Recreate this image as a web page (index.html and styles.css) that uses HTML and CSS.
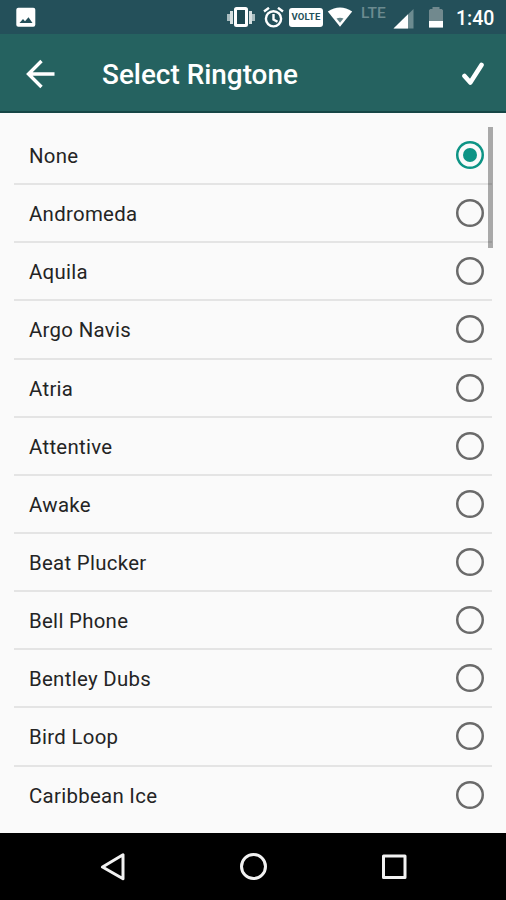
FILE: index.html
```html
<!DOCTYPE html>
<html lang="en">
<head>
<meta charset="utf-8">
<title>Select Ringtone</title>
<link rel="stylesheet" href="styles.css">
</head>
<body>
<div class="screen">
  <div class="status">
    <svg class="photo" width="20" height="20" viewBox="0 0 20 20"><rect x=".3" y=".8" width="19" height="19" rx="2" fill="#fff"/><path d="M3.500 16L7 12l2 2.200 3.500-4 4 5.800z" fill="#24505a"/></svg>
    <svg class="vibrate" width="28" height="20" viewBox="0 0 28 20"><path d="M0 7h3v7H0zM25 7h3v7h-3z" fill="#a9bcbf"/><path d="M3 4h3v13H3zM22 4h3v13h-3z" fill="#d5dfe0"/><rect x="8.500" y="1.500" width="11" height="17" rx="1" fill="#1e4851" stroke="#fff" stroke-width="3"/></svg>
    <svg class="alarm" width="21" height="21" viewBox="0 0 21 21" fill="none" stroke="#fff" stroke-width="2.400"><circle cx="10.500" cy="11.800" r="7.600"/><path d="M10.500 7v5.500l4 2.300M1 4.500l5-3.700M20 4.500l-5-3.700"/></svg>
    <span class="volte">VOLTE</span>
    <svg class="wifi" width="26" height="20" viewBox="0 0 26 20"><path d="M.8 4.500Q13-3.500 25.200 4.500L13 19.800z" fill="#fff"/><path d="M9.500 11.400q3.500-1.500 7 0L13 15.700z" fill="#65858a"/></svg>
    <span class="lte">LTE</span>
    <svg class="signal" width="21" height="20" viewBox="0 0 21 20"><path d="M20.500 0v19.500H.5z" fill="#6c8b90"/><path d="M15 5.300v14.200H.5z" fill="#fff"/></svg>
    <svg class="battery" width="14" height="21" viewBox="0 0 14 21"><path d="M3.500 0h7v2h2.300L14 3.200v17.300H0V3.200L1.200 2h2.300z" fill="#71898e"/><path d="M0 14h14v6.500H0z" fill="#fff"/></svg>
    <span class="clock">1:40</span>
  </div>
  <div class="toolbar">
    <svg class="back" width="30" height="30" viewBox="0 0 30 30" fill="none" stroke="#fff" stroke-width="3.400"><path d="M29.500 15H3M16.500 2L3.500 15l13 13"/></svg>
    <h1 class="title">Select Ringtone</h1>
    <svg class="done" width="24" height="24" viewBox="0 0 24 24" fill="none" stroke="#fff" stroke-width="4.600" stroke-linecap="round" stroke-linejoin="round"><path d="M3.500 14l5.800 6.500L20.500 3"/></svg>
  </div>
  <div class="content">
    <ul class="list">
      <li class="row"><span class="name">None</span><i class="radio on"></i></li>
      <li class="row"><span class="name">Andromeda</span><i class="radio"></i></li>
      <li class="row"><span class="name">Aquila</span><i class="radio"></i></li>
      <li class="row"><span class="name">Argo Navis</span><i class="radio"></i></li>
      <li class="row"><span class="name">Atria</span><i class="radio"></i></li>
      <li class="row"><span class="name">Attentive</span><i class="radio"></i></li>
      <li class="row"><span class="name">Awake</span><i class="radio"></i></li>
      <li class="row"><span class="name">Beat Plucker</span><i class="radio"></i></li>
      <li class="row"><span class="name">Bell Phone</span><i class="radio"></i></li>
      <li class="row"><span class="name">Bentley Dubs</span><i class="radio"></i></li>
      <li class="row"><span class="name">Bird Loop</span><i class="radio"></i></li>
      <li class="row"><span class="name">Caribbean Ice</span><i class="radio"></i></li>
    </ul>
    <div class="scrollbar"></div>
  </div>
  <div class="navbar">
    <svg width="28" height="28" viewBox="0 0 28 28" fill="none" stroke="#f2f2f2" stroke-width="3" stroke-linejoin="round"><path d="M24 1.800v24L3.500 14z"/></svg>
    <svg width="28" height="28" viewBox="0 0 28 28" fill="none" stroke="#f2f2f2" stroke-width="3"><circle cx="13.500" cy="13.500" r="12"/></svg>
    <svg width="28" height="28" viewBox="0 0 28 28" fill="none" stroke="#f2f2f2" stroke-width="3" stroke-linejoin="round"><rect x="3.500" y="3" width="21.500" height="21.500"/></svg>
  </div>
</div>
</body>
</html>
```

FILE: styles.css
```css
* { box-sizing: border-box; }
body { margin: 0; font-family: Roboto, "Liberation Sans", sans-serif; }
svg { display: block; flex: none; }
.screen { width: 506px; height: 900px; display: flex; flex-direction: column; background: #fafafa; overflow: hidden; }

.status { height: 34px; flex: none; display: flex; align-items: flex-start; background: #24505a; color: #fff; }
.photo { margin: 7px 0 0 16px; }
.vibrate { margin: 7px 0 0 191px; }
.alarm { margin: 7px 0 0 8px; }
.volte { width: 34px; height: 19px; margin: 8px 0 0 5px; border-radius: 3px; background: #fff; color: #24505a; font-size: 9.500px; font-weight: 700; line-height: 18px; letter-spacing: .2px; text-align: center; }
.wifi { margin: 7px 0 0 4px; }
.lte { width: 27px; margin: 4px 0 0 8px; color: #6c8b90; font-size: 15.500px; font-weight: 500; line-height: 19px; }
.signal { margin: 9px 0 0 5px; }
.battery { margin: 7px 0 0 15px; }
.clock { margin: 7px 0 0 13px; font-size: 19.500px; font-weight: 500; line-height: 24px; white-space: nowrap; }

.toolbar { height: 79px; flex: none; display: flex; align-items: center; padding: 2px 21px 0 25px; background: #256260; border-bottom: 2px solid #164646; color: #fff; }
.title { flex: 1; margin: 3px 0 0 47px; font-size: 27.900px; font-weight: 500; line-height: 36px; white-space: nowrap; }

.content { flex: 1; position: relative; padding: 14px 14px 0; }
.list { margin: 0; padding: 0; list-style: none; }
.row { height: 58.150px; display: flex; align-items: center; justify-content: space-between; padding: 0 8px 0 15px; border-bottom: 2px solid #e4e4e4; color: #242424; }
.row:last-child { border-bottom-color: transparent; }
.name { padding-top: 2px; font-size: 20.400px; letter-spacing: .3px; }
.radio { width: 28px; height: 28px; flex: none; display: flex; align-items: center; justify-content: center; border-radius: 50%; box-shadow: inset 0 0 0 2.500px #6a6a6a; }
.radio.on { box-shadow: inset 0 0 0 2.500px #0d9485; }
.radio.on::before { content: ""; width: 14px; height: 14px; border-radius: 50%; background: #0d9485; }
.scrollbar { position: absolute; top: 14px; right: 13px; width: 5px; height: 121px; background: rgba(0, 0, 0, .32); }

.navbar { height: 67px; flex: none; display: flex; justify-content: space-between; align-items: center; padding: 0 98px 0 99px; background: #000; }
```
